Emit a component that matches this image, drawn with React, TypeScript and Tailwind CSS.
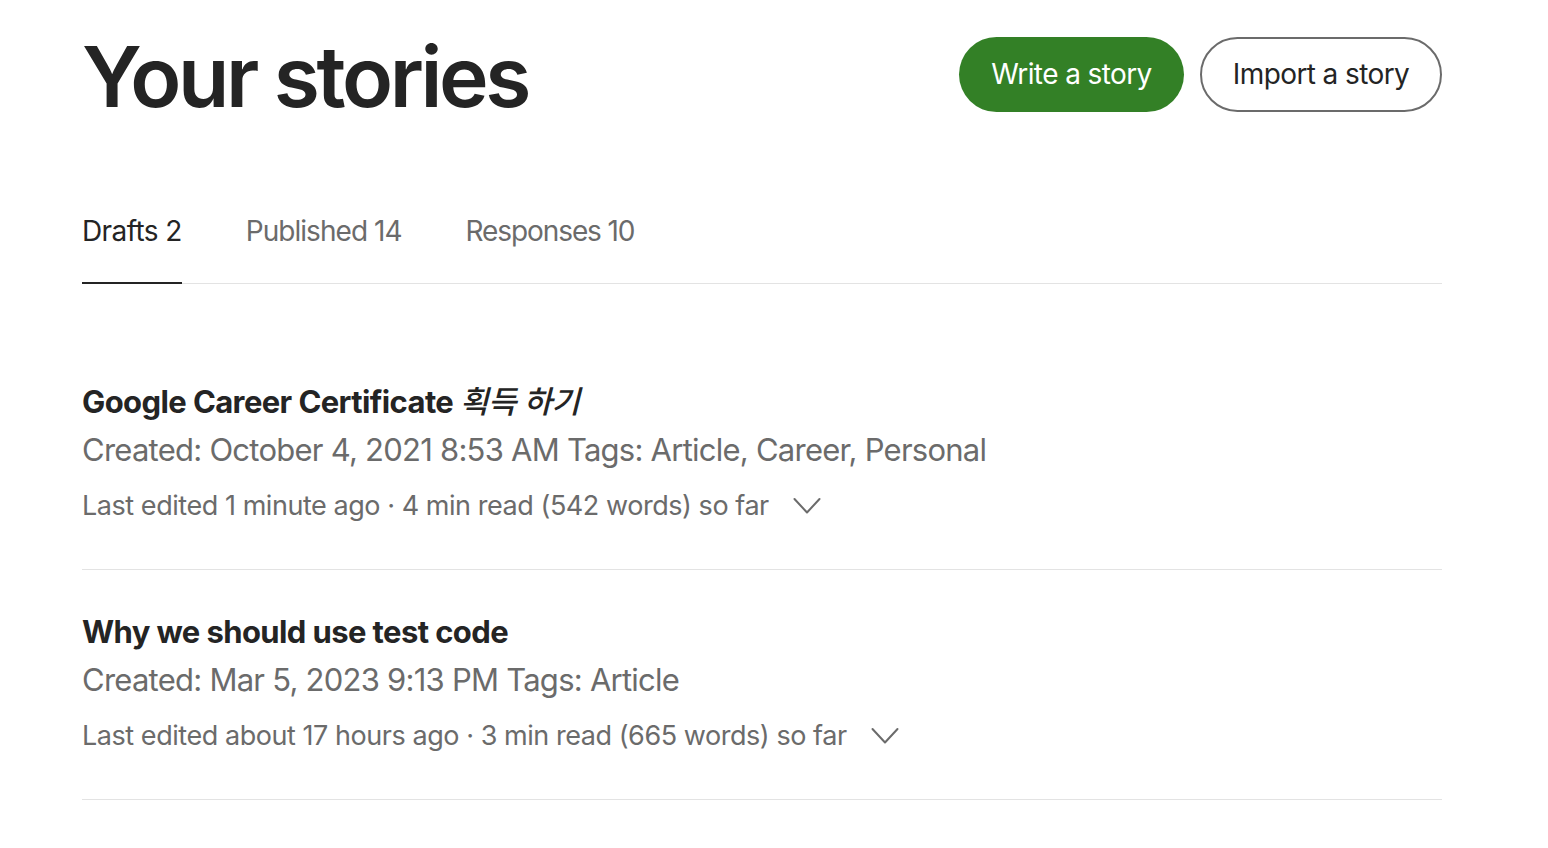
import React from "react";

const Chevron = () => (
  <svg width="28" height="18" viewBox="0 0 28 18" fill="none" className="shrink-0">
    <path d="M1.5 2 L14 15.5 L26.5 2" stroke="#6b6b6b" strokeWidth="2" strokeLinecap="round" strokeLinejoin="round" />
  </svg>
);

type Story = { title: React.ReactNode; created: string; edited: string };

const stories: Story[] = [
  {
    title: (
      <>
        Google Career Certificate <span className="italic font-medium">획득 하기</span>
      </>
    ),
    created: "Created: October 4, 2021 8:53 AM Tags: Article, Career, Personal",
    edited: "Last edited 1 minute ago · 4 min read (542 words) so far",
  },
  {
    title: "Why we should use test code",
    created: "Created: Mar 5, 2023 9:13 PM Tags: Article",
    edited: "Last edited about 17 hours ago · 3 min read (665 words) so far",
  },
];

export default function App() {
  return (
    <div
      className="min-h-screen bg-white text-[#242424]"
      style={{ fontFamily: "Inter, 'Noto Sans CJK KR', sans-serif" }}
    >
      <div className="ml-[82px] w-[1360px] pt-[33px]">
        <div className="flex items-center justify-between">
          <h1 className="text-[84px] leading-[88px] font-semibold tracking-[-3.4px]">Your stories</h1>
          <div className="flex items-center gap-[16px] mt-[-6px]">
            <button className="h-[75px] w-[225px] rounded-full bg-[#338026] text-white text-[28px] tracking-[-0.6px]">
              Write a story
            </button>
            <button className="h-[75px] w-[242px] rounded-full border-2 border-[#6b6b6b] text-[#242424] text-[28px] tracking-[-0.6px]">
              Import a story
            </button>
          </div>
        </div>

        <div className="mt-[92px] flex gap-[64px] border-b border-[#e3e3e3]">
          <div className="pb-[33px] border-b-2 border-[#242424] mb-[-1px] text-[28px] leading-[36px] tracking-[-0.6px] text-[#242424]">
            Drafts 2
          </div>
          <div className="pb-[33px] text-[28px] leading-[36px] tracking-[-0.95px] text-[#6b6b6b]">Published 14</div>
          <div className="pb-[33px] text-[28px] leading-[36px] tracking-[-1.1px] text-[#6b6b6b]">Responses 10</div>
        </div>

        <div className="mt-[98px]">
          {stories.map((s, i) => (
            <div key={i} className={`border-b border-[#e3e3e3] pb-[43px] ${i > 0 ? "pt-[42px]" : ""}`}>
              <div className="text-[31px] leading-[40px] font-bold tracking-[-0.6px] text-[#242424]">{s.title}</div>
              <div className="mt-[8px] text-[31px] leading-[40px] tracking-[-0.75px] text-[#6b6b6b]">{s.created}</div>
              <div className="mt-[16px] flex items-center gap-[24px] text-[27px] leading-[40px] tracking-[-0.45px] text-[#6b6b6b]">
                <span>{s.edited}</span>
                <Chevron />
              </div>
            </div>
          ))}
        </div>
      </div>
    </div>
  );
}
